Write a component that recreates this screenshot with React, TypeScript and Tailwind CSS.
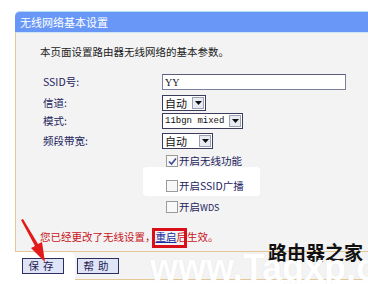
import React from "react";

const cjk = { fontFamily: '"Noto Sans CJK SC", "Liberation Sans", sans-serif' };
const mono = { fontFamily: '"Liberation Mono", "Noto Sans CJK SC", monospace' };

const Select = ({ value, width, isMono }: { value: string; width: number; isMono?: boolean }) => (
  <div
    className="flex h-[16px] border border-[#3b3b5c] bg-white"
    style={{ width }}
  >
    <span
      className="flex-1 overflow-hidden whitespace-nowrap pl-[2px] text-[11px] leading-[14px] text-[#111]"
      style={isMono ? { ...mono, fontSize: 9 } : cjk}
    >
      {value}
    </span>
    <span className="m-[1px] flex w-[12px] items-center justify-center border border-[#9aa0b4] bg-[#e9ebf2]">
      <svg width="7" height="4" viewBox="0 0 7 4">
        <path d="M0 0h7L3.5 4z" fill="#111" />
      </svg>
    </span>
  </div>
);

const Check = ({ checked, label }: { checked?: boolean; label: React.ReactNode }) => (
  <div className="flex h-[16px] items-center pl-[4px]">
    <span className="flex h-[12px] w-[12px] items-center justify-center border border-[#9a9a9a] bg-[#f8f8f8]">
      {checked && (
        <svg width="9" height="9" viewBox="0 0 9 9">
          <path d="M1 4.5l2.5 2.5L8 1.5" stroke="#3a4a9a" strokeWidth="1.6" fill="none" />
        </svg>
      )}
    </span>
    <span className="ml-[1px] whitespace-nowrap text-[10.5px] leading-[16px] text-[#23235e]" style={cjk}>
      {label}
    </span>
  </div>
);

const Row = ({ label, children, className }: { label: string; children: React.ReactNode; className?: string }) => (
  <div className={`flex h-[16px] items-center ${className ?? ""}`}>
    <span className="w-[146px] pl-[27px] text-[10.5px] leading-[16px] text-[#23235e]" style={cjk}>
      {label}
    </span>
    {children}
  </div>
);

export default function App() {
  return (
    <div className="relative h-[284px] w-[368px] overflow-hidden bg-white" style={cjk}>
      <div className="pl-[15px] pt-[11px]">
        <div className="flex h-[21px] items-center rounded-tl-[5px] border-t border-[#b3dcf5] bg-[#6897f7] pl-[5px] text-[11px] text-white">
          无线网络基本设置
        </div>
        <div className="flex h-[220px] flex-col border-b border-l border-t border-[#e3c796] border-t-[#cbe8f7] bg-[#f3f3f3]">
          <div className="mt-[11px] h-[16px] pl-[24px] text-[10.5px] leading-[16px] text-[#222]">
            本页面设置路由器无线网络的基本参数。
          </div>
          <Row label="SSID号:" className="mt-[14px]">
            <div className="flex h-[16px] w-[184px] items-center border border-[#7c7f9c] border-t-[#5b5e7a] bg-white pl-[2px] text-[10px] text-[#111]" style={{ fontFamily: '"Liberation Serif", serif' }}>
              YY
            </div>
          </Row>
          <Row label="信道:" className="mt-[5px]">
            <Select value="自动" width={44} />
          </Row>
          <Row label="模式:" className="mt-[2px]">
            <Select value="11bgn mixed" width={81} isMono />
          </Row>
          <Row label="频段带宽:" className="mt-[4px]">
            <Select value="自动" width={51} />
          </Row>
          <div className="mt-[4px] pl-[146px]">
            <Check checked label="开启无线功能" />
          </div>
          <div className="relative mt-[9px] pl-[146px]">
            <div className="absolute left-[127px] top-[-11px] h-[29px] w-[117px] rounded-[4px] bg-white" />
            <div className="relative">
              <Check label="开启SSID广播" />
            </div>
          </div>
          <div className="mt-[5px] pl-[146px]">
            <Check label={<>开启<span className="text-[9px]">WDS</span></>} />
          </div>
          <div className="relative mt-[14px] h-[16px] whitespace-nowrap pl-[24px] text-[10.5px] leading-[16px] text-[#c8141c]">
            您已经更改了无线设置，
            <span className="text-[#1a2aa0] underline">重启</span>
            后生效。
            <div className="absolute left-[136px] top-[-1px] h-[20px] w-[35px] border-[3px] border-[#d9101a]" />
          </div>
        </div>
        <div className="relative flex h-[28px] items-center gap-[13px] border-b border-[#e3c796] bg-[#f3f3f3] pl-[7px]">
          <div className="absolute left-[-5px] top-0 h-[32px] w-[65px] rounded-tr-[6px] bg-white" />
          <button className="relative h-[16px] w-[42px] border border-[#2d2d5e] bg-[#dfe4f6] text-[10.5px] leading-[14px] tracking-[4px] text-[#1c1c50]">
            保存
          </button>
          <button className="relative h-[16px] w-[42px] border border-[#2d2d5e] bg-[#dfe4f6] text-[10.5px] leading-[14px] tracking-[4px] text-[#1c1c50]">
            帮助
          </button>
        </div>
      </div>

      <svg className="absolute left-0 top-0" width="368" height="284" viewBox="0 0 368 284">
        <path d="M21 220 L35 246 L31 248 L45 262 L42 242 L38 244 L23 219 Z" fill="#e41a1a" />
      </svg>

      <div
        className="absolute left-[268px] top-[241px] whitespace-nowrap text-[19px] font-bold leading-[22px] text-[#111]"
        style={cjk}
      >
        路由器之家
      </div>
      <div
        className="absolute left-[150px] top-[249px] whitespace-nowrap text-[36px] font-bold leading-[38px] text-white"
        style={{ fontFamily: '"Liberation Sans", sans-serif', textShadow: "0 0 1px rgba(150,150,150,0.25)" }}
      >
        www.Tagxp.com
      </div>
    </div>
  );
}
